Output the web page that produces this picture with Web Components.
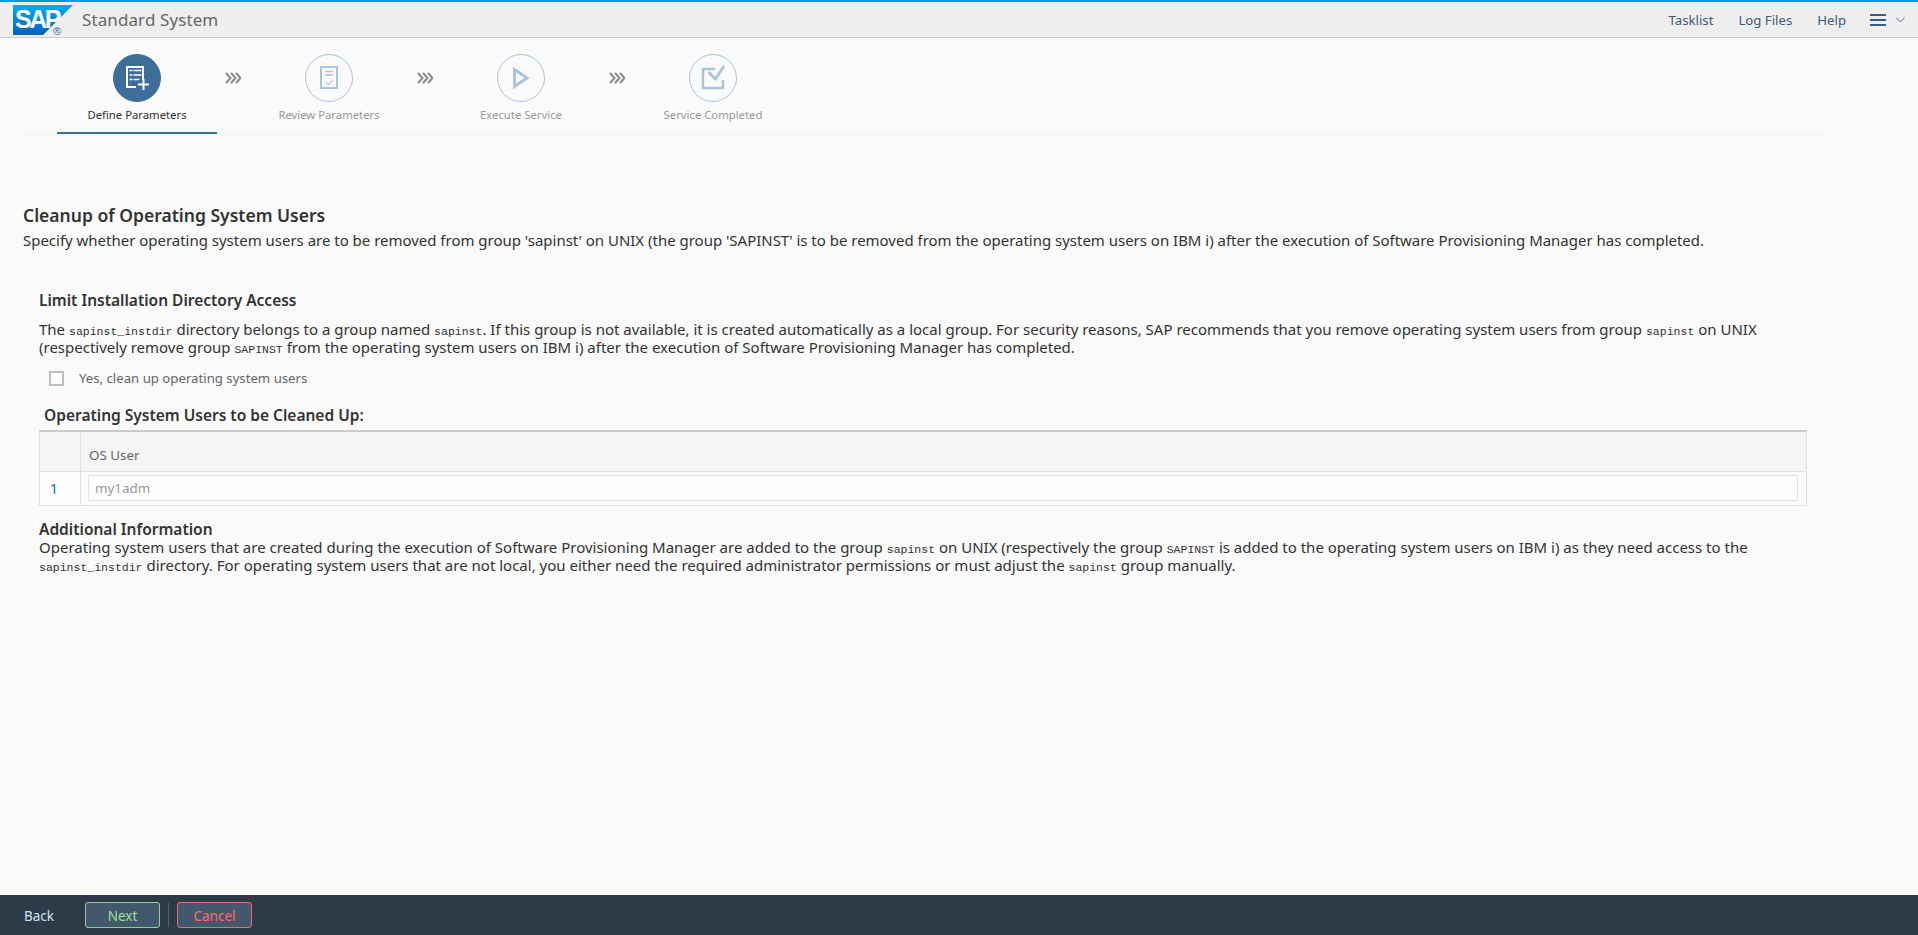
<!DOCTYPE html>
<html lang="en">
<head>
<meta charset="utf-8">
<title>Standard System</title>
<style>
  html, body { margin: 0; height: 100%; }
  body { background: #fafafa; font-family: "Noto Sans", "Open Sans", sans-serif; color: #333; }
  sap-page { height: 935px; }
</style>
</head>
<body>
<sap-page>
  <sap-app-header slot="header" title-text="Standard System"></sap-app-header>
  <sap-roadmap slot="header">
    <sap-road-step label="Define Parameters" active>
      <svg slot="icon" width="30" height="30" viewBox="0 0 30 30" fill="none" stroke="#fff" stroke-width="2">
        <path d="M21 17V4H5v20h9"/>
        <path d="M7.500 7.500h3M11.500 7.500h8M7.500 12h3M11.500 12h8M7.500 16.500h3M11.500 16.500h6" stroke-width="1.600"/>
        <path d="M21.500 16v11M16 21.500h11"/>
      </svg>
    </sap-road-step>
    <sap-road-sep></sap-road-sep>
    <sap-road-step label="Review Parameters">
      <svg slot="icon" width="24" height="30" viewBox="0 0 24 30" fill="none" stroke="#a9c4dc" stroke-width="2">
        <path d="M4 4h16v21H4z"/>
        <path d="M8 8.500h8M8 12h8" stroke-width="1.600"/>
        <path d="M8.500 19l3 2.500 4.500-4.500" stroke-width="1.100"/>
      </svg>
    </sap-road-step>
    <sap-road-sep></sap-road-sep>
    <sap-road-step label="Execute Service">
      <svg slot="icon" width="24" height="30" viewBox="0 0 24 30" fill="none" stroke="#a9c4dc" stroke-width="3">
        <path d="M5.500 6.500v17L18 15z"/>
      </svg>
    </sap-road-step>
    <sap-road-sep></sap-road-sep>
    <sap-road-step label="Service Completed">
      <svg slot="icon" width="30" height="30" viewBox="0 0 30 30" fill="none" stroke="#a9c4dc" stroke-width="2.400">
        <path d="M17 6H5v19h20v-8"/>
        <path d="M10.500 9l7 7L26 3" stroke-width="2.800"/>
      </svg>
    </sap-road-step>
  </sap-roadmap>

  <sap-step-title heading="Cleanup of Operating System Users">
    Specify whether operating system users are to be removed from group 'sapinst' on UNIX (the group 'SAPINST' is to be removed from the operating system users on IBM i) after the execution of Software Provisioning Manager has completed.
  </sap-step-title>

  <sap-section heading="Limit Installation Directory Access" top="42" gap="11">
    The <sap-mono>sapinst_instdir</sap-mono> directory belongs to a group named <sap-mono>sapinst</sap-mono>. If this group is not available, it is created automatically as a local group. For security reasons, SAP recommends that you remove operating system users from group <sap-mono>sapinst</sap-mono> on UNIX<br>(respectively remove group <sap-mono>SAPINST</sap-mono> from the operating system users on IBM i) after the execution of Software Provisioning Manager has completed.
  </sap-section>

  <sap-checkbox label="Yes, clean up operating system users"></sap-checkbox>

  <sap-user-table heading="Operating System Users to be Cleaned Up:" column="OS User" row="1" value="my1adm"></sap-user-table>

  <sap-section heading="Additional Information" top="14" gap="0">
    Operating system users that are created during the execution of Software Provisioning Manager are added to the group <sap-mono>sapinst</sap-mono> on UNIX (respectively the group <sap-mono>SAPINST</sap-mono> is added to the operating system users on IBM i) as they need access to the<br><sap-mono>sapinst_instdir</sap-mono> directory. For operating system users that are not local, you either need the required administrator permissions or must adjust the <sap-mono>sapinst</sap-mono> group manually.
  </sap-section>

  <sap-action-bar slot="footer"></sap-action-bar>
</sap-page>

<script>
class SapPage extends HTMLElement {
  constructor() {
    super();
    this.attachShadow({ mode: 'open' });
    this.shadowRoot.innerHTML = `
      <style>
        :host { display: flex; flex-direction: column; }
        .content { flex: 1; min-height: 0; padding-top: 68px; }
      </style>
      <slot name="header"></slot>
      <div class="content"><slot></slot></div>
      <slot name="footer"></slot>
    `;
  }
}

class SapAppHeader extends HTMLElement {
  constructor() {
    super();
    this.attachShadow({ mode: 'open' });
  }

  connectedCallback() {
    this.shadowRoot.innerHTML = `
      <style>
        :host {
          display: flex;
          align-items: center;
          height: 35px;
          background: #eee;
          border-top: 2px solid #009de0;
          border-bottom: 1px solid #ccc;
        }
        .logo { display: block; align-self: flex-start; margin: 3px 0 0 13px; }
        .title { margin-left: 7px; font-size: 17px; color: #666; letter-spacing: 0.1px; }
        nav { margin-left: auto; display: flex; align-items: center; font-size: 13.200px; color: #3a5a7c; }
        nav a { margin-left: 25px; }
        .menu { display: flex; align-items: center; margin-left: 24px; margin-right: 13px; }
        .menu svg { display: block; }
      </style>
      <svg class="logo" width="62" height="32" viewBox="0 0 62 32">
        <defs>
          <linearGradient id="sapblue" x1="0" y1="0" x2="0" y2="1">
            <stop offset="0" stop-color="#00aeef"/>
            <stop offset="1" stop-color="#0a5fb4"/>
          </linearGradient>
        </defs>
        <path d="M0 0h60L30 30H0z" fill="url(#sapblue)"/>
        <text x="2" y="23" font-family="Liberation Sans" font-size="25" font-weight="700" letter-spacing="-2.500" fill="#fff">SAP</text>
        <text x="40" y="30" font-family="Liberation Sans" font-size="11" fill="#2a6db5">®</text>
      </svg>
      <span class="title">${this.getAttribute('title-text')}</span>
      <nav>
        <a>Tasklist</a>
        <a>Log Files</a>
        <a>Help</a>
        <div class="menu">
          <svg width="16" height="12" viewBox="0 0 16 12" fill="#2f5f8a">
            <rect y="0" width="16" height="2"/><rect y="5" width="16" height="2"/><rect y="10" width="16" height="2"/>
          </svg>
          <svg style="margin-left:10px" width="9" height="6" viewBox="0 0 9 6" fill="none" stroke="#5a7a9a">
            <path d="M.3.5 4.500 5 8.700.5"/>
          </svg>
        </div>
      </nav>
    `;
  }
}

class SapRoadmap extends HTMLElement {
  constructor() {
    super();
    this.attachShadow({ mode: 'open' });
    this.shadowRoot.innerHTML = `
      <style>
        :host {
          display: flex;
          margin: 0 94px 0 23px;
          padding-left: 34px;
          border-bottom: 1px solid #eef3f7;
        }
      </style>
      <slot></slot>
    `;
  }
}

class SapRoadStep extends HTMLElement {
  constructor() {
    super();
    this.attachShadow({ mode: 'open' });
  }

  connectedCallback() {
    const active = this.hasAttribute('active');
    this.shadowRoot.innerHTML = `
      <style>
        :host {
          display: flex;
          flex-direction: column;
          align-items: center;
          width: 160px;
          height: 96px;
          box-sizing: border-box;
          padding-top: 16px;
          border-bottom: 2px solid ${active ? '#3d6d99' : 'transparent'};
          font-size: 11.300px;
          color: ${active ? '#333' : '#999'};
        }
        .circle {
          width: 48px;
          height: 48px;
          box-sizing: border-box;
          border-radius: 50%;
          display: flex;
          align-items: center;
          justify-content: center;
          background: ${active ? '#3d6d99' : 'transparent'};
          border: 1px solid ${active ? '#3d6d99' : '#a9c4dc'};
        }
        .label { margin-top: 5px; line-height: 16px; }
      </style>
      <div class="circle"><slot name="icon"></slot></div>
      <div class="label">${this.getAttribute('label')}</div>
    `;
  }
}

class SapRoadSep extends HTMLElement {
  constructor() {
    super();
    this.attachShadow({ mode: 'open' });
    this.shadowRoot.innerHTML = `
      <style>
        :host { display: flex; justify-content: center; width: 32px; padding-top: 34px; height: 60px; }
        svg { display: block; }
      </style>
      <svg width="16" height="12" viewBox="0 0 16 12" fill="none" stroke="#8a8a8a" stroke-width="2">
        <path d="M1 1l4.500 5L1 11M6 1l4.500 5L6 11M11 1l4.500 5L11 11"/>
      </svg>
    `;
  }
}

class SapStepTitle extends HTMLElement {
  constructor() {
    super();
    this.attachShadow({ mode: 'open' });
  }

  connectedCallback() {
    this.shadowRoot.innerHTML = `
      <style>
        :host { display: block; margin-left: 23px; font-size: 14.970px; line-height: 18px; color: #333; }
        h2 { margin: 0 0 4px; font-size: 17.500px; line-height: 24px; font-weight: 600; }
      </style>
      <h2>${this.getAttribute('heading')}</h2>
      <slot></slot>
    `;
  }
}

class SapSection extends HTMLElement {
  constructor() {
    super();
    this.attachShadow({ mode: 'open' });
  }

  connectedCallback() {
    const top = this.getAttribute('top') || 0;
    const gap = this.getAttribute('gap') || 0;
    this.shadowRoot.innerHTML = `
      <style>
        :host { display: block; margin: ${top}px 40px 0 39px; font-size: 15px; line-height: 18px; color: #333; }
        h3 { margin: 0 0 ${gap}px; font-size: 15.500px; line-height: 18px; font-weight: 600; }
      </style>
      <h3>${this.getAttribute('heading')}</h3>
      <slot></slot>
    `;
  }
}

// Inline element: no whitespace around the slot, it would render as a mono space
class SapMono extends HTMLElement {
  constructor() {
    super();
    this.attachShadow({ mode: 'open' });
    this.shadowRoot.innerHTML = '<style>:host { font-family: "Liberation Mono", monospace; font-size: 11.500px; line-height: 1; }</style><slot></slot>';
  }
}

class SapCheckbox extends HTMLElement {
  constructor() {
    super();
    this.attachShadow({ mode: 'open' });
  }

  connectedCallback() {
    this.shadowRoot.innerHTML = `
      <style>
        :host { display: flex; align-items: center; margin: 12px 0 0 49px; height: 20px; font-size: 13.200px; color: #666; }
        .box { width: 15px; height: 15px; box-sizing: border-box; border: 2px solid #bfbfbf; background: #fff; }
        .label { margin-left: 15px; }
      </style>
      <div class="box"></div>
      <div class="label">${this.getAttribute('label')}</div>
    `;
  }
}

class SapUserTable extends HTMLElement {
  constructor() {
    super();
    this.attachShadow({ mode: 'open' });
  }

  connectedCallback() {
    this.shadowRoot.innerHTML = `
      <style>
        :host { display: block; margin: 18px 111px 0 39px; color: #333; }
        h3 { margin: 0 0 6px 5px; font-size: 15.500px; line-height: 18px; font-weight: 600; }
        .table { border: 1px solid #e0e0e0; border-top: 2px solid #ccc; }
        .row { display: grid; grid-template-columns: 40px 1fr; }
        .head { height: 40px; box-sizing: border-box; background: #f5f5f5; border-bottom: 1px solid #e0e0e0; }
        .head div + div { border-left: 1px solid #e0e0e0; padding: 14px 0 0 8px; font-size: 13.400px; line-height: 18px; color: #666; }
        .body { height: 33px; background: #fcfcfc; }
        .num { padding-left: 10px; font-size: 14px; line-height: 33px; color: #2f5f8a; }
        .cell { border-left: 1px solid #e0e0e0; padding: 3px 8px 4px 7px; }
        .input { height: 26px; box-sizing: border-box; border: 1px solid #e0e0e0; background: #fdfdfd; padding-left: 6px; font-size: 13.400px; line-height: 24px; color: #999; }
      </style>
      <h3>${this.getAttribute('heading')}</h3>
      <div class="table">
        <div class="row head"><div></div><div>${this.getAttribute('column')}</div></div>
        <div class="row body">
          <div class="num">${this.getAttribute('row')}</div>
          <div class="cell"><div class="input">${this.getAttribute('value')}</div></div>
        </div>
      </div>
    `;
  }
}

class SapActionBar extends HTMLElement {
  constructor() {
    super();
    this.attachShadow({ mode: 'open' });
    this.shadowRoot.innerHTML = `
      <style>
        :host {
          display: flex;
          align-items: center;
          height: 40px;
          background: #2e3a47;
          font-size: 13.500px;
          color: #fff;
        }
        .back { margin-left: 24px; width: 61px; padding-top: 2px; color: #cfe3f5; }
        .btn {
          width: 75px;
          height: 26px;
          box-sizing: border-box;
          border-radius: 3px;
          background: #44586b;
          text-align: center;
          line-height: 26px;
        }
        .next { border: 1px solid #8fd18f; color: #9be29b; }
        .cancel { border: 1px solid #ef6b6b; color: #ff6b6b; }
        .divider { width: 1px; height: 24px; margin: 0 8px; background: #55626f; }
      </style>
      <div class="back">Back</div>
      <div class="btn next">Next</div>
      <div class="divider"></div>
      <div class="btn cancel">Cancel</div>
    `;
  }
}

customElements.define('sap-page', SapPage);
customElements.define('sap-app-header', SapAppHeader);
customElements.define('sap-roadmap', SapRoadmap);
customElements.define('sap-road-step', SapRoadStep);
customElements.define('sap-road-sep', SapRoadSep);
customElements.define('sap-step-title', SapStepTitle);
customElements.define('sap-section', SapSection);
customElements.define('sap-mono', SapMono);
customElements.define('sap-checkbox', SapCheckbox);
customElements.define('sap-user-table', SapUserTable);
customElements.define('sap-action-bar', SapActionBar);
</script>
</body>
</html>
